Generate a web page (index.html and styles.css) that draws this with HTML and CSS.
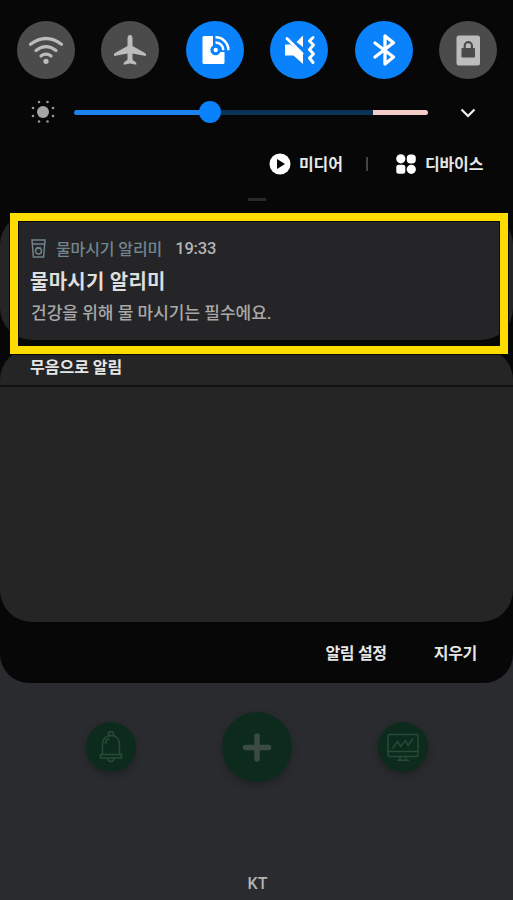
FILE: index.html
```html
<!DOCTYPE html>
<html lang="ko">
<head>
<meta charset="utf-8">
<title>알림</title>
<link rel="stylesheet" href="styles.css">
</head>
<body>
<main class="screen">
  <section class="shade">
    <div class="toggles">
      <div class="toggle"><svg viewBox="0 0 58 58"><g fill="none" stroke="#bcbcbc" stroke-width="3.2" stroke-linecap="round"><path d="M13.500 23.200Q29 11.800 44.500 23.200M19 29.500Q29 21.800 39 29.500M24 35Q29 31.400 34 35"/></g><circle cx="29" cy="40.300" r="2.600" fill="#bcbcbc"/></svg></div>
      <div class="toggle"><svg viewBox="0 0 58 58"><path fill="#bcbcbc" d="M29 14c1.6 0 2.5 1.6 2.5 3.6v7.3L44 32c1 .7 1.2 1.6.9 2.9L31.500 32.500v6.300l3.300 2.400c.6.6.7 1.600.5 2.600L29 42.500l-6.300 1.300c-.2-1-.1-2 .5-2.600l3.300-2.400v-6.300l-13.400 2.400c-.3-1.300-.1-2.200.9-2.900l12.500-7.100v-7.300c0-2 .9-3.600 2.500-3.600z"/></svg></div>
      <div class="toggle on"><svg viewBox="0 0 58 58"><path fill="#fff" d="M18 15h9v9.600a5.200 5.200 0 1 0 7.400 6.400H38.500V41.500a1.500 1.500 0 0 1-1.500 1.500H18a1.500 1.500 0 0 1-1.500-1.500V16.500A1.500 1.500 0 0 1 18 15z"/><circle cx="29.700" cy="29" r="2.200" fill="#fff"/><g fill="none" stroke="#fff" stroke-width="2.500"><path d="M29.500 21.500a7.500 7.500 0 0 1 7.700 7.700M29.500 16.300a12.700 12.700 0 0 1 12.900 12.900"/></g></svg></div>
      <div class="toggle on"><svg viewBox="0 0 58 58"><path fill="#fff" d="M15 23.500h5.500L33 34v9l-9.500-8.500H15zM26.500 21l6.500-6.500V26z"/><g fill="none" stroke="#fff" stroke-width="3" stroke-linecap="round" stroke-linejoin="round"><path d="m17 17.500 15 15M43 16.500l-3.500 3.500 4 4-4 4.500 4 4.500-4 4 3.500 4.500"/></g></svg></div>
      <div class="toggle on"><svg viewBox="0 0 58 58"><path fill="none" stroke="#fff" stroke-width="3.300" stroke-linecap="round" stroke-linejoin="round" d="m20 22 18.500 14-8.500 7V15l8.500 6.800L20 36"/></svg></div>
      <div class="toggle"><svg viewBox="0 0 58 58"><rect x="17.500" y="14.500" width="23.500" height="30" rx="2.500" fill="#bcbcbc"/><rect x="22.500" y="27" width="13.500" height="9.500" rx="1" fill="#4b4b4b"/><path d="M25.700 28v-3.200a3.600 3.600 0 0 1 7.200 0V28" fill="none" stroke="#4b4b4b" stroke-width="2.200"/></svg></div>
    </div>

    <div class="brightness">
      <svg class="sun" viewBox="0 0 26 26"><circle cx="13" cy="13" r="6" fill="#a5a5a5"/><g fill="#969696"><circle cx="9" cy="3" r="1.300"/><circle cx="17.500" cy="3" r="1.300"/><circle cx="23" cy="9" r="1.300"/><circle cx="23" cy="17" r="1.300"/><circle cx="17.500" cy="22.500" r="1.300"/><circle cx="9" cy="22.500" r="1.300"/><circle cx="3" cy="17" r="1.300"/><circle cx="3" cy="9" r="1.300"/></g></svg>
      <div class="track"><span class="filled"></span><span class="knob"></span><span class="rest"></span><span class="limit"></span></div>
      <svg class="chevron" viewBox="0 0 16 10"><path d="m1.500 1.500 6.500 6.500 6.500-6.500" fill="none" stroke="#f2f2f2" stroke-width="2.200"/></svg>
    </div>

    <div class="outputs">
      <svg class="play" viewBox="0 0 22 22"><circle cx="11" cy="11" r="10.500" fill="#fff"/><path d="M8 6v10l8-5z" fill="#080808"/></svg>
      <span class="label">미디어</span>
      <span class="divider"></span>
      <svg class="devices" viewBox="0 0 20 20"><g fill="#fff"><circle cx="4.800" cy="4.800" r="4.600"/><rect x="10.800" y=".4" width="9" height="9" rx="3.600"/><rect x=".3" y="10.800" width="9" height="9" rx="2.500"/><circle cx="15.300" cy="15.300" r="4.600"/></g></svg>
      <span class="label">디바이스</span>
    </div>
    <div class="handle"></div>

    <article class="notification">
      <header class="source">
        <svg class="cup" viewBox="0 0 15 19"><g fill="none" stroke="#71838c" stroke-width="1.500"><path d="M1 1h13l-1.400 17H2.400zM1.500 5h12"/><circle cx="7.500" cy="12" r="3"/><path d="m5.500 8 2 1.500 2-1.500"/></g></svg>
        <span class="app">물마시기 알리미</span>
        <time>19:33</time>
      </header>
      <h1>물마시기 알리미</h1>
      <p>건강을 위해 물 마시기는 필수에요.</p>
      <div class="highlight"></div>
    </article>

    <section class="silent"><h2>무음으로 알림</h2></section>

    <footer class="actions"><span>알림 설정</span><span>지우기</span></footer>
  </section>

  <nav class="dock">
    <div class="round"><svg viewBox="0 0 50 50"><g fill="none" stroke="#284a38" stroke-width="1.500"><path d="M16.500 32.500V22.500c0-6 4-9 8.500-9s8.500 3 8.500 9v10M14.500 32.500h21v3.500h-21zM22.500 13.500V12a2.500 2.500 0 0 1 5 0v1.500M22 36.500a3 3 0 0 0 6 0M19.500 22c0-3 1.500-5 4-5.500"/></g></svg></div>
    <div class="round large"><svg viewBox="0 0 70 70"><path d="M35 24v23M23.500 35.500h23" stroke="#3b4b42" stroke-width="5.500" stroke-linecap="round"/></svg></div>
    <div class="round"><svg viewBox="0 0 50 50"><g fill="none" stroke="#284a38" stroke-width="1.500"><rect x="10" y="12.500" width="30" height="22" rx="2"/><path d="M10 29.500h30M22 35v3M28 35v3M19 38.300h12M14.500 26.500l5-7 3 5 5-6 2.500 5 5-7"/></g></svg></div>
  </nav>
  <div class="carrier">KT</div>
</main>
</body>
</html>
```
FILE: styles.css
```css
* { box-sizing: border-box; }
body {
  margin: 0;
  background: #2a2b2f;
  font-family: Roboto, "Noto Sans CJK KR", sans-serif;
  color: #e6e6e6;
}
svg { display: block; flex: none; }
h1, h2, p { margin: 0; }
.screen {
  width: 513px;
  height: 900px;
  display: flex;
  flex-direction: column;
  overflow: hidden;
}
.shade {
  height: 683px;
  flex: none;
  display: flex;
  flex-direction: column;
  background: #070707;
  border-radius: 0 0 29px 29px;
}
.toggles {
  display: flex;
  justify-content: space-between;
  padding: 21px 16px 0 17px;
}
.toggle {
  width: 58px;
  height: 58px;
  border-radius: 50%;
  background: #4b4b4b;
}
.toggle.on { background: #0a82fc; }
.brightness {
  display: flex;
  align-items: center;
  height: 26px;
  margin-top: 20px;
  padding-left: 30px;
}
.sun { width: 26px; height: 26px; }
.track {
  width: 354px;
  margin-left: 18px;
  display: flex;
  align-items: center;
}
.filled { width: 126px; height: 5px; background: #1c82ee; border-radius: 3px 0 0 3px; }
.knob { width: 22px; height: 22px; margin-left: -1px; border-radius: 50%; background: #0a82fc; }
.rest { width: 152px; height: 5px; background: #0b3252; }
.limit { flex: 1; height: 5px; background: #f3cdc7; border-radius: 0 3px 3px 0; }
.chevron { width: 16px; height: 10px; margin: 1px 0 0 32px; }
.outputs {
  display: flex;
  align-items: center;
  height: 24px;
  margin-top: 27px;
  padding-left: 269px;
}
.play { width: 22px; height: 22px; }
.label {
  margin-left: 8px;
  padding-top: 2px;
  font-size: 16px;
  line-height: 24px;
  font-weight: 700;
  letter-spacing: -0.1px;
  white-space: nowrap;
}
.divider { width: 2px; height: 14px; margin: 0 28px 0 23px; background: #444; }
.devices { width: 20px; height: 20px; }
.devices + .label { margin-left: 9px; }
.handle {
  width: 18px;
  height: 3px;
  margin: 22px auto 0;
  background: #292929;
}
.notification {
  position: relative;
  height: 127px;
  margin-top: 12px;
  padding: 23px 30px 0;
  background: #252527;
  border-radius: 32px;
}
.highlight {
  position: absolute;
  left: 10px;
  right: 5px;
  top: 0;
  height: 141px;
  border: 8px solid #ffdc00;
  box-shadow: inset 0 0 0 1px #080808, 0 0 0 1px #080808;
}
.source { display: flex; align-items: center; height: 24px; }
.cup { width: 15px; height: 19px; margin: 0 2px 0 1px; }
.app {
  margin-left: 8px;
  font-size: 16px;
  font-weight: 500;
  color: #71868f;
  letter-spacing: -0.1px;
  white-space: nowrap;
}
time { margin-left: 13px; font-size: 16.5px; font-weight: 500; color: #b4b4b4; letter-spacing: -0.2px; }
.notification h1 { height: 38px; font-size: 20px; line-height: 44px; font-weight: 700; color: #dedede; letter-spacing: 0.25px; }
.notification p { font-size: 17px; line-height: 30px; font-weight: 500; color: #a8a8a8; padding-left: 1px; }
.silent {
  height: 274px;
  margin-top: 8px;
  background: #252525;
  border-radius: 32px;
}
.silent h2 {
  height: 39px;
  padding: 8px 30px 0;
  border-bottom: 2px solid #121212;
  font-size: 16px;
  line-height: 24px;
  font-weight: 700;
}
.actions {
  flex: 1;
  display: flex;
  justify-content: flex-end;
  align-items: center;
  gap: 47px;
  padding: 0 36px 2px 0;
  font-size: 16px;
  font-weight: 700;
  letter-spacing: -0.3px;
}
.dock {
  display: flex;
  align-items: center;
  justify-content: space-between;
  height: 70px;
  margin-top: 29px;
  padding: 0 85px 0 86px;
}
.round {
  width: 50px;
  height: 50px;
  border-radius: 50%;
  background: #0d2b1c;
  box-shadow: 0 3px 6px #202124;
}
.round.large { width: 70px; height: 70px; }
.carrier {
  margin: auto 0 5px;
  padding-left: 2px;
  text-align: center;
  font-size: 16px;
  line-height: 22px;
  font-weight: 500;
  color: #b4b4b4;
}
```
